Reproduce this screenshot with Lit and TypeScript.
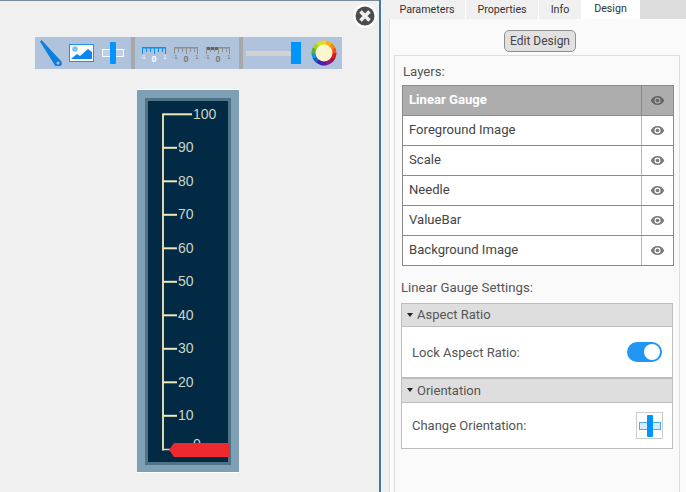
import { LitElement, html, css, svg } from "lit";
import { customElement } from "lit/decorators.js";

const eye = (c: string) => html`<svg class="eye" width="15" height="11" viewBox="0 0 16 12"><path fill="${c}" fill-rule="evenodd" d="M8 1C4.600 1 1.800 3.100.6 6c1.200 2.900 4 5 7.400 5s6.200-2.100 7.400-5C14.200 3.100 11.400 1 8 1zm0 8.300A3.300 3.300 0 1 1 8 2.700a3.300 3.300 0 0 1 0 6.600z"/><circle cx="8" cy="6" r="2" fill="${c}"/></svg>`;

const ruler = (mode: number) => {
  const line = mode === 0 ? "#0a90f5" : "#8e8e8e";
  const txt = mode === 0 ? "#fff" : "#777";
  const ticks = [0, 4, 8, 12, 16, 20, 23];
  return html`<svg width="24" height="15" viewBox="0 0 24 15" class="ruler">
    <rect x="0" y="0" width="24" height="1.500" fill="${line}"/>
    ${mode === 2 ? svg`<rect x="0" y="0" width="12" height="3" fill="#666"/>` : ""}
    ${ticks.map((t) => svg`<rect x="${t}" y="0" width="1" height="${t % 12 === 0 || t === 23 ? 7 : 5}" fill="${line}"/>`)}
    <text x="1" y="12" font-size="6" fill="${txt}" font-family="Liberation Sans" text-anchor="middle">-1</text>
    <text x="12" y="14.500" font-size="9" font-weight="700" fill="${txt}" font-family="Liberation Sans" text-anchor="middle">0</text>
    <text x="23" y="12" font-size="6" fill="${txt}" font-family="Liberation Sans" text-anchor="middle">1</text>
  </svg>`;
};

const wheel = () => {
  const cols = ["#f2d21b", "#fdb100", "#fb8c00", "#f4511e", "#d81b1b", "#a8123f", "#8a1a80", "#5a16a8", "#3a1fb0", "#1565c0", "#0f9ad6", "#5cb531", "#a4cf2a", "#d7e021"];
  const n = cols.length;
  const cx = 13, cy = 13, r = 12.5;
  return html`<svg width="26" height="26" viewBox="0 0 26 26">
    ${cols.map((c, i) => {
      const a0 = ((i - 0.5) / n) * Math.PI * 2 - Math.PI / 2;
      const a1 = ((i + 0.5) / n) * Math.PI * 2 - Math.PI / 2 + 0.02;
      return svg`<path fill="${c}" d="M${cx} ${cy}L${cx + r * Math.cos(a0)} ${cy + r * Math.sin(a0)}A${r} ${r} 0 0 1 ${cx + r * Math.cos(a1)} ${cy + r * Math.sin(a1)}Z"/>`;
    })}
    <circle cx="13" cy="13" r="8.500" fill="#fdf5ce"/>
  </svg>`;
};

@customElement("app-root")
export class AppRoot extends LitElement {
  static styles = css`
    :host { display: block; width: 686px; height: 492px; overflow: hidden; font-family: "Roboto", "Liberation Sans", sans-serif; color: #444; }
    * { box-sizing: border-box; }
    .page { display: flex; height: 492px; background: #f0f0f0; }
    .canvas { position: relative; width: 379px; height: 492px; border-top: 1px solid #7a8a99; display: flex; flex-direction: column; padding: 36px 0 0 35px; background: #f0f0f0; }
    .close { position: absolute; left: 353px; top: 3px; width: 24px; height: 24px; }
    .toolbar { width: 307px; height: 32px; background: #afc3dc; display: flex; align-items: center; flex: none; position: relative; }
    .sep { width: 4px; height: 32px; background: #a8a8a8; flex: none; }
    .g1 { width: 96px; display: flex; align-items: center; height: 32px; flex: none; padding-left: 5px; }
    .g1 .needle { margin-right: 7px; }
    .g1 .image { margin-right: 8px; }
    .g2 { width: 104px; display: flex; align-items: center; height: 32px; flex: none; padding: 2px 0 0 7px; gap: 8px; }
    .ruler { overflow: visible; }
    .g3 { flex: 1; display: flex; align-items: center; height: 32px; padding-left: 3px; }
    .slider { width: 55px; height: 20px; display: flex; align-items: center; flex: none; }
    .track { width: 45px; height: 5px; background: #d2d2d2; }
    .knob { width: 10px; height: 22px; background: #0094ff; flex: none; }
    .wheel { margin-left: 10px; display: flex; }
    .gauge { margin-top: 21px; margin-left: 102px; width: 102px; height: 382px; background: #7f9fb5; box-shadow: 0 -1px 0 #fff, 0 1px 0 #fff; flex: none; display: flex; padding: 8px; }
    .face { width: 86px; height: 367px; background: #022a45; border: 3px solid #4f7488; position: relative; }
    .face svg { display: block; overflow: visible; }
    .bar { position: absolute; left: 21px; top: 342px; width: 61px; height: 14px; background: #ee2a2e; clip-path: polygon(5px 0, 100% 0, 100% 100%, 5px 100%, 0 50%); }
    .divider { width: 3px; background: #3d77ab; border-right: 1px solid #fff; flex: none; }
    .right { width: 304px; display: flex; flex-direction: column; padding-left: 7px; background: #f0f0f0; }
    .tabs { display: flex; height: 19px; flex: none; background: #dcdcdc; font-size: 10.700px; }
    .tab { height: 19px; display: flex; align-items: center; justify-content: center; background: #f0f0f0; border-right: 1px solid #fff; color: #333; }
    .tab.active { background: #fff; padding-bottom: 2px; }
    .pane { flex: 1; background: #fafafa; display: flex; flex-direction: column; padding: 0 6px 0 4px; border-left: 1px solid #ddd; }
    .editrow { display: flex; padding: 11px 0 0 110px; height: 36px; flex: none; }
    .edit { width: 72px; height: 22px; border: 1px solid #8f8f8f; border-radius: 5px; background: #e1e1e1; font-size: 12px; display: flex; align-items: center; justify-content: center; color: #444; }
    .group { flex: 1; border: 1px solid #dedede; border-bottom: 0; padding: 3px 6px 0 7px; }
    .lbl { font-size: 13.200px; color: #555; height: 24px; display: flex; align-items: center; }
    .layers { padding-left: 1px; margin-bottom: 2px; }
    .table { width: 272px; border: 1px solid #8a8a8a; background: #fff; }
    .row { height: 30px; display: flex; font-size: 13.100px; color: #444; border-top: 1px solid #8a8a8a; }
    .row:first-child { border-top: 0; height: 29px; }
    .row .name { flex: 1; display: flex; align-items: center; padding: 0 0 2px 6px; }
    .row .vis { width: 32px; border-left: 1px solid #b8b8b8; display: flex; align-items: center; justify-content: center; }
    .row.sel { background: #adadad; color: #fff; font-weight: 700; }
    .row.sel .vis { border-left-color: #8a8a8a; }
    .settings { margin: 9px 0 4px -1px; }
    .acc { width: 272px; margin-left: -1px; border: 1px solid #bdbdbd; background: #fff; }
    .head { height: 23px; background: #dedede; border-bottom: 1px solid #bdbdbd; display: flex; align-items: center; font-size: 13px; color: #555; padding: 0 0 1px 5px; gap: 4px; }
    .head.second { height: 26px; border-top: 2px solid #bdbdbd; }
    .tri { width: 0; height: 0; border-left: 3.500px solid transparent; border-right: 3.500px solid transparent; border-top: 4px solid #222; flex: none; }
    .line { display: flex; align-items: center; justify-content: space-between; font-size: 13px; color: #555; padding: 0 10px; }
    .line.a { height: 50px; }
    .line.b { height: 45px; padding-right: 9px; }
    .toggle { width: 35px; height: 20px; border-radius: 10px; background: #2196f3; display: flex; align-items: center; justify-content: flex-end; padding-right: 2px; }
    .toggle i { width: 16px; height: 16px; border-radius: 50%; background: #fff; display: block; }
    .obtn { width: 27px; height: 27px; border: 1px solid #ccc; background: #fff; display: flex; align-items: center; justify-content: center; }
  `;

  render() {
    const labels = [100, 90, 80, 70, 60, 50, 40, 30, 20, 10, 0];
    const rows = ["Foreground Image", "Scale", "Needle", "ValueBar", "Background Image"];
    const orient = (stroke: string, fill: string) => html`<svg width="22" height="22" viewBox="0 0 22 22">
      <rect x=".5" y="7.500" width="21" height="7" fill="${fill}" stroke="${stroke}"/>
      <rect x="8" y="0" width="6" height="22" rx="1" fill="#0094ff"/>
    </svg>`;
    return html`<div class="page">
      <div class="canvas">
        <svg class="close" viewBox="0 0 24 24">
          <circle cx="12" cy="12" r="12" fill="#fff"/>
          <circle cx="12" cy="12" r="9.500" fill="#4d4d4d"/>
          <path d="M7.500 7.500l9 9M16.500 7.500l-9 9" stroke="#f0f0f0" stroke-width="3.500"/>
        </svg>
        <div class="toolbar">
          <div class="g1">
            <svg class="needle" width="22" height="26" viewBox="0 0 22 26">
              <path d="M0 1.500L1.500 0 21 21a3.800 3.800 0 1 1-6.500 3.800z" fill="#0a7fe0"/>
              <circle cx="18" cy="23" r="1.500" fill="#afc3dc"/>
            </svg>
            <svg class="image" width="25" height="18" viewBox="0 0 25 18">
              <rect x=".5" y=".5" width="24" height="17" fill="#fff" stroke="#1e90ef"/>
              <circle cx="6" cy="5" r="2.800" fill="#7cc0f5"/>
              <path d="M2 15l6-5 3 2 8-7 4 3v7H2z" fill="#0a86ee"/>
            </svg>
            ${orient("#fff", "#c0cfe3")}
          </div>
          <div class="sep"></div>
          <div class="g2">${ruler(0)}${ruler(1)}${ruler(2)}</div>
          <div class="sep"></div>
          <div class="g3">
            <div class="slider"><div class="track"></div><div class="knob"></div></div>
            <div class="wheel">${wheel()}</div>
          </div>
        </div>
        <div class="gauge">
          <div class="face">
            <svg width="80" height="361" viewBox="0 0 80 361">
              <path d="M15 12.500V349.500" stroke="#d9d9ae" stroke-width="2" fill="none"/>
              <path d="M14 348.500h8" stroke="#d9d9ae" stroke-width="1.500"/>
              ${labels.map((v, i) => {
                const y = 13.3 + i * 33.5;
                if (v === 0) return svg`<text x="45" y="${y}" fill="#cfd8c0" font-size="14" font-family="Liberation Sans">0</text>`;
                const x2 = v === 100 ? 44 : 29;
                return svg`<path d="M15 ${y}H${x2}" stroke="#efe9b8" stroke-width="2"/>
                  <text x="${x2 + 1}" y="${y + 4.5}" fill="#cdd6c4" font-size="14" font-family="Liberation Sans">${v}</text>`;
              })}
            </svg>
            <div class="bar"></div>
          </div>
        </div>
      </div>
      <div class="divider"></div>
      <div class="right">
        <div class="tabs">
          <div class="tab" style="width:77px">Parameters</div>
          <div class="tab" style="width:73px">Properties</div>
          <div class="tab" style="width:43px">Info</div>
          <div class="tab active" style="width:58px">Design</div>
        </div>
        <div class="pane">
          <div class="editrow"><div class="edit">Edit Design</div></div>
          <div class="group">
            <div class="lbl layers">Layers:</div>
            <div class="table">
              <div class="row sel"><div class="name">Linear Gauge</div><div class="vis">${eye("#666")}</div></div>
              ${rows.map((r) => html`<div class="row"><div class="name">${r}</div><div class="vis">${eye("#7a7a7a")}</div></div>`)}
            </div>
            <div class="lbl settings">Linear Gauge Settings:</div>
            <div class="acc">
              <div class="head"><span class="tri"></span>Aspect Ratio</div>
              <div class="line a">Lock Aspect Ratio:<div class="toggle"><i></i></div></div>
              <div class="head second"><span class="tri"></span>Orientation</div>
              <div class="line b">Change Orientation:<div class="obtn">${orient("#4aa8f5", "#d8ecfb")}</div></div>
            </div>
          </div>
        </div>
      </div>
    </div>`;
  }
}
